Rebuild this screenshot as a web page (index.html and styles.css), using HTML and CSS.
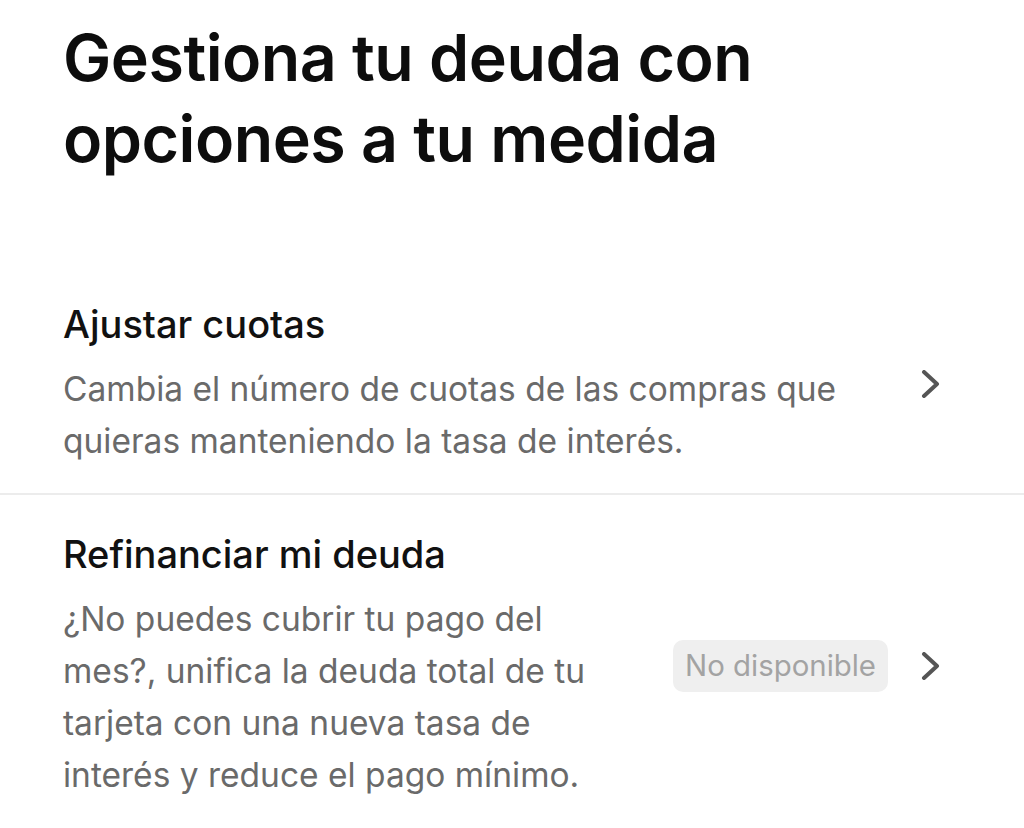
FILE: index.html
```html
<!DOCTYPE html>
<html lang="es">
<head>
<meta charset="utf-8">
<link rel="stylesheet" href="styles.css">
</head>
<body>
<main class="page">
  <h1 class="title">Gestiona tu deuda con opciones a tu medida</h1>
  <ul class="options">
    <li class="option">
      <div class="option-text">
        <h2 class="option-title">Ajustar cuotas</h2>
        <p class="option-desc">Cambia el número de cuotas de las compras que quieras manteniendo la tasa de interés.</p>
      </div>
      <div class="option-side">
        <svg class="chevron" viewBox="0 0 20 28" width="20" height="28"><path d="M4 2 L17 14 L4 26" fill="none" stroke="#555" stroke-width="4" stroke-linecap="round" stroke-linejoin="round"/></svg>
      </div>
    </li>
    <li class="option option-second">
      <div class="option-text">
        <h2 class="option-title">Refinanciar mi deuda</h2>
        <p class="option-desc">¿No puedes cubrir tu pago del mes?, unifica la deuda total de tu tarjeta con una nueva tasa de interés y reduce el pago mínimo.</p>
      </div>
      <div class="option-side">
        <span class="badge">No disponible</span>
        <svg class="chevron" viewBox="0 0 20 28" width="20" height="28"><path d="M4 2 L17 14 L4 26" fill="none" stroke="#555" stroke-width="4" stroke-linecap="round" stroke-linejoin="round"/></svg>
      </div>
    </li>
  </ul>
</main>
</body>
</html>
```
FILE: styles.css
```css
html, body {
  margin: 0;
  padding: 0;
  background: #fff;
}
body {
  font-family: Inter, "Noto Sans", sans-serif;
  color: #111;
}
.page {
  padding-top: 18px;
}
.title {
  margin: 0;
  padding: 0 200px 0 63px;
  font-size: 64.5px;
  line-height: 81px;
  font-weight: 600;
  letter-spacing: -0.5px;
  color: #0d0d0d;
}
.options {
  list-style: none;
  margin: 120px 0 0 0;
  padding: 0;
}
.option {
  display: flex;
  align-items: center;
  padding: 0 84px 26px 63px;
}
.option-second {
  border-top: 2px solid #ececec;
  padding-top: 35px;
}
.option-text {
  flex: 1;
  min-width: 0;
}
.option-title {
  margin: 0 0 15px 0;
  font-size: 38px;
  line-height: 48px;
  font-weight: 500;
  color: #111;
}
.option-desc {
  margin: 0;
  font-size: 33.5px;
  line-height: 52px;
  font-weight: 400;
  color: #6a6a6a;
}
.option-side {
  display: flex;
  align-items: center;
  gap: 32px;
  margin-left: 60px;
}
.chevron {
  display: block;
}
.badge {
  background: #efefef;
  color: #a3a3a3;
  border-radius: 10px;
  padding: 8px 12px;
  font-size: 29.4px;
  line-height: 36px;
}
```
